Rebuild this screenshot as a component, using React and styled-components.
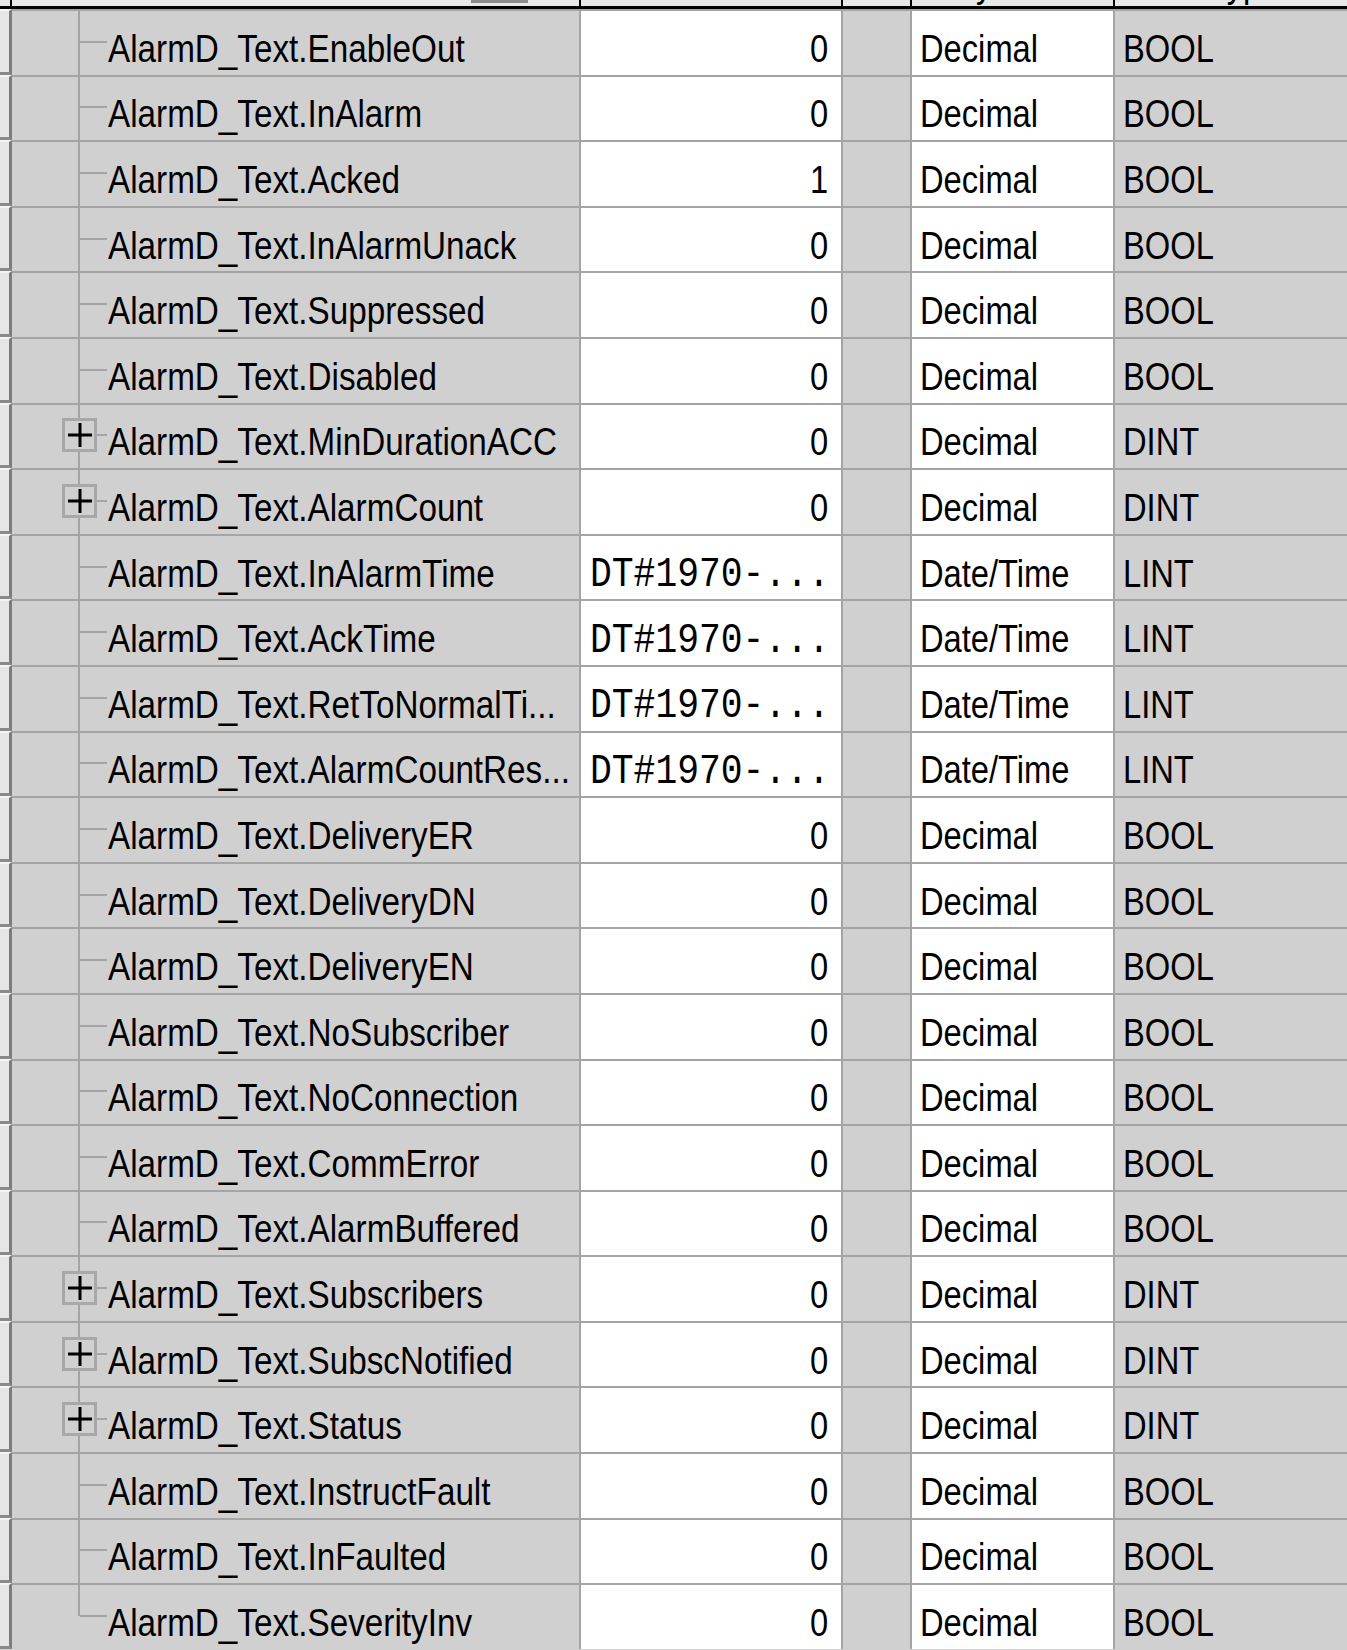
import React from "react";
import styled, { createGlobalStyle } from "styled-components";

const Global = createGlobalStyle`
  html, body { margin: 0; padding: 0; background: #d0d0d0; overflow: hidden; }
  * { box-sizing: border-box; }
`;

const COLS = "12px 569px 262px 69px 203px 1fr";
const ROW_H = 65.6;
const GRAY = "#d0d0d0";
const LINE = "#a4a4a4";
const UI_FONT = `"Liberation Sans", Arial, sans-serif`;

const Grid = styled.div`
  width: 1347px;
  height: 1650px;
  overflow: hidden;
  background: ${GRAY};
  display: flex;
  flex-direction: column;
`;

const HeaderRow = styled.div`
  display: grid;
  grid-template-columns: ${COLS};
  height: 9px;
  flex: none;
`;

const HeaderCell = styled.div`
  background: #e8e8e8;
  border-bottom: 3px solid #000;
  border-right: ${(p) => (p.$last ? "none" : "2px solid #000")};
  overflow: hidden;
  display: flex;
  align-items: flex-start;
  padding-left: ${(p) => p.$pad ?? 8}px;
  font-family: ${UI_FONT};
  font-size: 38px;
  line-height: 38px;
  color: #000;
  white-space: nowrap;
`;

const HeaderText = styled.span`
  display: inline-block;
  margin-top: -35px;
  transform: scaleX(0.86);
  transform-origin: left center;
`;

const SortMark = styled.span`
  margin-left: auto;
  margin-right: 51px;
  width: 57px;
  height: 3px;
  background: #8c8c8c;
`;

const Row = styled.div`
  display: grid;
  grid-template-columns: ${COLS};
  height: ${ROW_H}px;
  flex: none;
`;

const RowHead = styled.div`
  background: #e6e6e6;
  border-right: 3px solid #7c7c7c;
  border-bottom: 3px solid #8a8a8a;
  border-top: 2px solid #f4f4f4;
`;

const Cell = styled.div`
  border-top: 2px solid ${LINE};
  border-right: ${(p) => (p.$last ? "none" : `2px solid ${LINE}`)};
  background: ${(p) => (p.$white ? "#fff" : GRAY)};
  display: flex;
  align-items: center;
  justify-content: ${(p) => (p.$right ? "flex-end" : "flex-start")};
  padding: 13px ${(p) => (p.$right ? "13px" : "0")} 0 ${(p) => (p.$right ? "0" : "8px")};
  font-family: ${UI_FONT};
  font-size: 38px;
  color: #000;
  white-space: nowrap;
  overflow: hidden;
`;

const NameCell = styled(Cell)`
  padding-left: 0;
  align-items: stretch;
`;

const Txt = styled.span`
  display: inline-block;
  align-self: center;
  transform: scaleX(${(p) => p.$scale ?? 0.86});
  transform-origin: ${(p) => (p.$right ? "right" : "left")} center;
`;

const MonoValue = styled.span`
  display: inline-block;
  font-family: "Liberation Mono", "Courier New", monospace;
  font-size: 42px;
  padding-top: 2px;
  transform: scaleX(0.865);
  transform-origin: left center;
`;

const Tree = styled.div`
  position: relative;
  width: 96px;
  flex: none;
  margin-top: -15px;

  &::before {
    content: "";
    position: absolute;
    left: 66px;
    top: 0;
    width: 2px;
    height: ${(p) => (p.$end ? "50%" : "100%")};
    background: ${LINE};
  }

  &::after {
    content: "";
    position: absolute;
    left: 68px;
    top: calc(50% - 1px);
    width: 27px;
    height: 2px;
    background: ${LINE};
  }
`;

const Expander = styled.span`
  position: absolute;
  left: 50px;
  top: calc(50% - 17px);
  width: 35px;
  height: 34px;
  border: 3px solid #a8a8a8;
  background: ${GRAY};
  z-index: 1;
  display: flex;
  align-items: center;
  justify-content: center;
`;

const Plus = () => (
  <svg width="26" height="26" viewBox="0 0 26 26">
    <rect x="1" y="11.5" width="24" height="3" fill="#000" />
    <rect x="11.5" y="1" width="3" height="24" fill="#000" />
  </svg>
);

const rows = [
  ["EnableOut", "0", "Decimal", "BOOL"],
  ["InAlarm", "0", "Decimal", "BOOL"],
  ["Acked", "1", "Decimal", "BOOL"],
  ["InAlarmUnack", "0", "Decimal", "BOOL"],
  ["Suppressed", "0", "Decimal", "BOOL"],
  ["Disabled", "0", "Decimal", "BOOL"],
  ["MinDurationACC", "0", "Decimal", "DINT", true],
  ["AlarmCount", "0", "Decimal", "DINT", true],
  ["InAlarmTime", "DT#1970-...", "Date/Time", "LINT"],
  ["AckTime", "DT#1970-...", "Date/Time", "LINT"],
  ["RetToNormalTi...", "DT#1970-...", "Date/Time", "LINT"],
  ["AlarmCountRes...", "DT#1970-...", "Date/Time", "LINT"],
  ["DeliveryER", "0", "Decimal", "BOOL"],
  ["DeliveryDN", "0", "Decimal", "BOOL"],
  ["DeliveryEN", "0", "Decimal", "BOOL"],
  ["NoSubscriber", "0", "Decimal", "BOOL"],
  ["NoConnection", "0", "Decimal", "BOOL"],
  ["CommError", "0", "Decimal", "BOOL"],
  ["AlarmBuffered", "0", "Decimal", "BOOL"],
  ["Subscribers", "0", "Decimal", "DINT", true],
  ["SubscNotified", "0", "Decimal", "DINT", true],
  ["Status", "0", "Decimal", "DINT", true],
  ["InstructFault", "0", "Decimal", "BOOL"],
  ["InFaulted", "0", "Decimal", "BOOL"],
  ["SeverityInv", "0", "Decimal", "BOOL"],
];

export default function App() {
  return (
    <>
      <Global />
      <Grid>
        <HeaderRow>
          <HeaderCell />
          <HeaderCell>
            <SortMark />
          </HeaderCell>
          <HeaderCell />
          <HeaderCell />
          <HeaderCell $pad={33}>
            <HeaderText>Style</HeaderText>
          </HeaderCell>
          <HeaderCell $last $pad={16}>
            <HeaderText>Data Type</HeaderText>
          </HeaderCell>
        </HeaderRow>
        {rows.map(([name, value, style, type, expandable], i) => {
          const isDate = value.startsWith("DT#");
          return (
            <Row key={name}>
              <RowHead />
              <NameCell>
                <Tree $end={i === rows.length - 1}>
                  {expandable && (
                    <Expander>
                      <Plus />
                    </Expander>
                  )}
                </Tree>
                <Txt $scale={0.875}>AlarmD_Text.{name}</Txt>
              </NameCell>
              {isDate ? (
                <Cell $white style={{ paddingLeft: 9 }}>
                  <MonoValue>{value}</MonoValue>
                </Cell>
              ) : (
                <Cell $white $right>
                  <Txt $right>{value}</Txt>
                </Cell>
              )}
              <Cell />
              <Cell $white>
                <Txt>{style}</Txt>
              </Cell>
              <Cell $last>
                <Txt>{type}</Txt>
              </Cell>
            </Row>
          );
        })}
      </Grid>
    </>
  );
}
